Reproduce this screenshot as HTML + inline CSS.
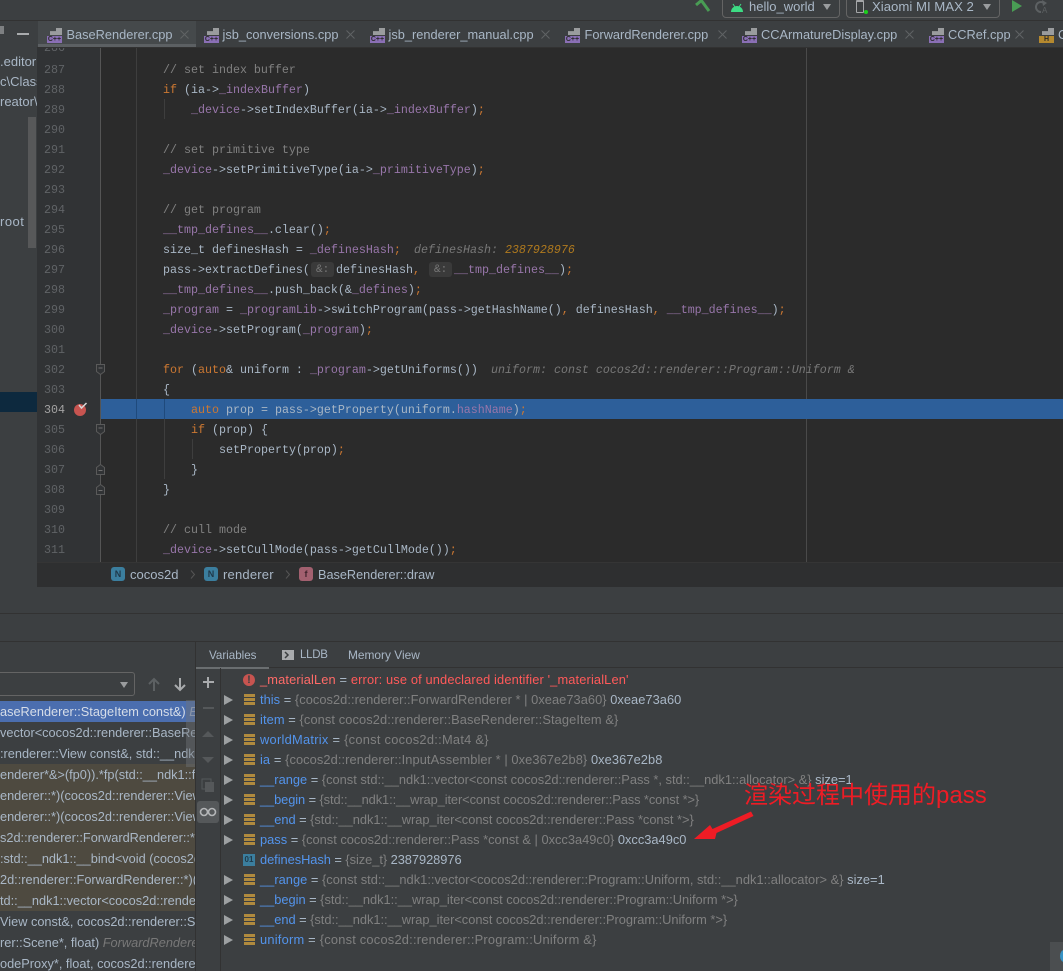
<!DOCTYPE html>
<html><head><meta charset="utf-8"><title>BaseRenderer.cpp</title>
<style>
html,body{margin:0;padding:0;background:#3c3f41;overflow:hidden}
#r{position:relative;width:1063px;height:971px;overflow:hidden;background:#3c3f41;font-family:"Liberation Sans","Noto Sans CJK SC",sans-serif;font-size:12.8px;color:#a9b7c6}
.a{position:absolute}
.t{position:absolute;white-space:pre;line-height:20px;height:20px}
.c{position:absolute;white-space:pre;font-family:"Liberation Mono",monospace;font-size:11.66px;line-height:20px;height:20px;color:#a9b7c6;margin-top:1px}
.n{position:absolute;left:44px;font-family:"Liberation Mono",monospace;font-size:11.66px;line-height:20px;color:#606366;margin-top:1px}
i{font-style:normal}
.k{color:#cc7832}.f{color:#9876aa}.m{color:#808080}.h{color:#787878;font-style:italic}.o{color:#b07a1e;font-style:italic}
.tab{position:absolute;top:25px;white-space:pre;line-height:20px;color:#a9b7c6;font-size:12.8px}
.x{position:absolute;top:30px}
.fd{position:absolute;top:28px;width:15px;height:16px}
.fd b{position:absolute;left:3px;top:0;width:12px;height:7px;background:#9a9c9e;clip-path:polygon(0 100%,0 45%,50% 45%,50% 0,100% 0,100% 100%)}
.fd u{position:absolute;left:0;top:8px;width:15px;height:7px;background:#8a6fb5;color:#2b2b2b;font:bold 7px/7px "Liberation Sans",sans-serif;text-align:center;text-decoration:none}
.v{position:absolute;left:260px;white-space:pre;line-height:20px;font-size:12.85px;color:#808080}
.v i{color:#5394ec}.v s{text-decoration:none;color:#a9b7c6}
.ar{position:absolute;left:224px;width:0;height:0;border-left:9px solid #9da0a2;border-top:5px solid transparent;border-bottom:5px solid transparent}
.ic{position:absolute;left:244px;width:11px;height:11px;background:repeating-linear-gradient(#b08a3e 0 3px,#3c3f41 3px 4px)}
.s{position:absolute;left:0;width:195px;overflow:hidden;white-space:pre;line-height:21px;height:21px;color:#a9b7c6;font-size:12.75px;padding-top:1px;box-sizing:content-box}
.fold{position:absolute;left:96px}
.ln{position:absolute;width:1px;background:#3e3e3e}
</style></head><body><div id="r">

<!-- top toolbar -->
<div class="a" style="left:0;top:20px;width:1063px;height:1px;background:#323232"></div>
<svg class="a" style="left:695px;top:0" width="16" height="13"><path d="M6 0L14 11" stroke="#499c54" stroke-width="3" fill="none"/><path d="M1 5L7 0" stroke="#499c54" stroke-width="3"/></svg>
<div class="a" style="left:722px;top:-6px;width:116px;height:22px;border:1px solid #646464;border-radius:4px"></div>
<svg class="a" style="left:730px;top:3px" width="15" height="10"><path d="M1 9A6 6 0 0 1 13 9Z" fill="#3ddc84"/><path d="M3 1L5 4M11 1L9 4" stroke="#3ddc84"/></svg>
<div class="t" style="left:749px;top:-3px;font-size:13px">hello_world</div>
<div class="a" style="left:823px;top:4px;border-top:6px solid #9a9c9e;border-left:4.5px solid transparent;border-right:4.5px solid transparent"></div>
<div class="a" style="left:846px;top:-6px;width:152px;height:22px;border:1px solid #646464;border-radius:4px"></div>
<div class="a" style="left:856px;top:0;width:6px;height:10px;border:1px solid #a4a6a8;border-top-width:2px;border-radius:1px"></div>
<div class="a" style="left:864px;top:10px;width:4px;height:4px;background:#1bd01b;border-radius:50%"></div>
<div class="t" style="left:872px;top:-3px;font-size:13.2px">Xiaomi MI MAX 2</div>
<div class="a" style="left:983px;top:4px;border-top:6px solid #9a9c9e;border-left:4.5px solid transparent;border-right:4.5px solid transparent"></div>
<div class="a" style="left:1012px;top:0;border-left:10px solid #499c54;border-top:6px solid transparent;border-bottom:6px solid transparent"></div>
<svg class="a" style="left:1034px;top:0" width="16" height="14"><path d="M10 3A5 5 0 1 0 7 12" stroke="#5d6163" stroke-width="2" fill="none"/><path d="M8 0L13 3L9 6Z" fill="#5d6163"/><text x="8" y="13" font-size="8" font-family="Liberation Sans" fill="#5d6163">A</text></svg>

<!-- left sidebar -->
<div class="a" style="left:0;top:26px;width:4px;height:8px;background:#9a9c9e;opacity:.7"></div>
<div class="a" style="left:17px;top:33px;width:12px;height:2px;background:#a9abad"></div>
<div class="t" style="left:0;top:52px;font-size:13px">.editor</div>
<div class="t" style="left:0;top:72px;font-size:13px;width:37px;overflow:hidden">c\Class</div>
<div class="t" style="left:0;top:92px;font-size:13px;width:37px;overflow:hidden">reator\</div>
<div class="t" style="left:0;top:212px;font-size:13px;letter-spacing:.5px">root</div>
<div class="a" style="left:28px;top:117px;width:8px;height:131px;background:#575859"></div>
<div class="a" style="left:0;top:392px;width:37px;height:20px;background:#0d293e"></div>

<!-- tab bar -->
<div class="a" style="left:38px;top:21px;width:158px;height:27px;background:#45494b"></div>
<div class="a" style="left:38px;top:44px;width:158px;height:4px;background:#5c6063"></div>
<div class="fd" style="left:47px"><b></b><u>C++</u></div><div class="tab" style="left:66.5px">BaseRenderer.cpp</div><svg class="x" style="left:180px" width="9" height="9"><path d="M.5 .5L8.5 8.5M8.5 .5L.5 8.5" stroke="#606365"/></svg>
<div class="fd" style="left:204px"><b></b><u>C++</u></div><div class="tab" style="left:222.5px">jsb_conversions.cpp</div><svg class="x" style="left:346px" width="9" height="9"><path d="M.5 .5L8.5 8.5M8.5 .5L.5 8.5" stroke="#606365"/></svg>
<div class="fd" style="left:370px"><b></b><u>C++</u></div><div class="tab" style="left:388.5px">jsb_renderer_manual.cpp</div><svg class="x" style="left:541px" width="9" height="9"><path d="M.5 .5L8.5 8.5M8.5 .5L.5 8.5" stroke="#606365"/></svg>
<div class="fd" style="left:565px"><b></b><u>C++</u></div><div class="tab" style="left:584.5px">ForwardRenderer.cpp</div><svg class="x" style="left:718px" width="9" height="9"><path d="M.5 .5L8.5 8.5M8.5 .5L.5 8.5" stroke="#606365"/></svg>
<div class="fd" style="left:742px"><b></b><u>C++</u></div><div class="tab" style="left:761px">CCArmatureDisplay.cpp</div><svg class="x" style="left:905px" width="9" height="9"><path d="M.5 .5L8.5 8.5M8.5 .5L.5 8.5" stroke="#606365"/></svg>
<div class="fd" style="left:929px"><b></b><u>C++</u></div><div class="tab" style="left:948px">CCRef.cpp</div><svg class="x" style="left:1015px" width="9" height="9"><path d="M.5 .5L8.5 8.5M8.5 .5L.5 8.5" stroke="#606365"/></svg>
<div class="fd" style="left:1039px"><b></b><u style="background:#b5892f">H</u></div><div class="tab" style="left:1058px">C</div>

<!-- editor -->
<div class="a" style="left:37px;top:47px;width:63px;height:540px;background:#313335;overflow:hidden">
 <div class="n" style="left:7px;top:-10px">286</div>
</div>
<div class="a" style="left:100px;top:47px;width:1px;height:515px;background:#555"></div>
<div class="a" style="left:101px;top:47px;width:962px;height:515px;background:#2b2b2b"></div>
<div class="a" style="left:37px;top:47px;width:1026px;height:1px;background:#323232"></div>
<div class="a" style="left:136px;top:48px;width:1px;height:514px;background:#3e3e3e"></div>
<div class="a" style="left:806px;top:48px;width:1px;height:514px;background:#4a4a4a"></div>
<div class="ln" style="left:164px;top:99px;height:20px"></div>
<div class="ln" style="left:164px;top:399px;height:80px"></div>
<div class="ln" style="left:192px;top:439px;height:20px"></div>
<div class="a" style="left:101px;top:399px;width:962px;height:20px;background:#2d5f9a"></div>
<div class="a" style="left:136px;top:399px;width:1px;height:20px;background:#1f4a7c"></div>
<div class="a" style="left:164px;top:399px;width:1px;height:20px;background:#1f4a7c"></div>
<svg class="fold" style="top:364px" width="9" height="11"><path d="M.5 .5H8.5V7.5L4.5 10.5L.5 7.5Z" fill="#313335" stroke="#5a5a5a"/><path d="M2.5 4H6.5" stroke="#6e6e6e"/></svg>
<svg class="fold" style="top:424px" width="9" height="11"><path d="M.5 .5H8.5V7.5L4.5 10.5L.5 7.5Z" fill="#313335" stroke="#5a5a5a"/><path d="M2.5 4H6.5" stroke="#6e6e6e"/></svg>
<svg class="fold" style="top:464px" width="9" height="11"><path d="M4.5 .5L8.5 3.5V10.5H.5V3.5Z" fill="#313335" stroke="#5a5a5a"/><path d="M2.5 6.5H6.5" stroke="#6e6e6e"/></svg>
<svg class="fold" style="top:484px" width="9" height="11"><path d="M4.5 .5L8.5 3.5V10.5H.5V3.5Z" fill="#313335" stroke="#5a5a5a"/><path d="M2.5 6.5H6.5" stroke="#6e6e6e"/></svg>

<div class="n" style="top:59px">287</div><div class="n" style="top:79px">288</div><div class="n" style="top:99px">289</div><div class="n" style="top:119px">290</div><div class="n" style="top:139px">291</div><div class="n" style="top:159px">292</div><div class="n" style="top:179px">293</div><div class="n" style="top:199px">294</div><div class="n" style="top:219px">295</div><div class="n" style="top:239px">296</div><div class="n" style="top:259px">297</div><div class="n" style="top:279px">298</div><div class="n" style="top:299px">299</div><div class="n" style="top:319px">300</div><div class="n" style="top:339px">301</div><div class="n" style="top:359px">302</div><div class="n" style="top:379px">303</div><div class="n" style="top:399px;color:#a4a3a3">304</div><div class="n" style="top:419px">305</div><div class="n" style="top:439px">306</div><div class="n" style="top:459px">307</div><div class="n" style="top:479px">308</div><div class="n" style="top:499px">309</div><div class="n" style="top:519px">310</div><div class="n" style="top:539px">311</div>

<div class="a" style="left:74px;top:404px;width:12px;height:12px;border-radius:50%;background:#c75450"></div>
<svg class="a" style="left:78px;top:402px" width="10" height="8"><path d="M1 3L3.5 6L8.5 1" stroke="#d8d8d8" stroke-width="1.5" fill="none"/></svg>

<div class="c m" style="left:163px;top:59px">// set index buffer</div>
<div class="c" style="left:163px;top:79px"><i class="k">if</i> (ia-&gt;<i class="f">_indexBuffer</i>)</div>
<div class="c" style="left:191px;top:99px"><i class="f">_device</i>-&gt;setIndexBuffer(ia-&gt;<i class="f">_indexBuffer</i>)<i class="k">;</i></div>
<div class="c m" style="left:163px;top:139px">// set primitive type</div>
<div class="c" style="left:163px;top:159px"><i class="f">_device</i>-&gt;setPrimitiveType(ia-&gt;<i class="f">_primitiveType</i>)<i class="k">;</i></div>
<div class="c m" style="left:163px;top:199px">// get program</div>
<div class="c" style="left:163px;top:219px"><i class="f">__tmp_defines__</i>.clear()<i class="k">;</i></div>
<div class="c" style="left:163px;top:239px">size_t definesHash = <i class="f">_definesHash</i><i class="k">;</i></div>
<div class="c h" style="left:414px;top:239px">definesHash: <i class="o">2387928976</i></div>
<div class="c" style="left:163px;top:259px">pass-&gt;extractDefines(</div>
<div class="a" style="left:311px;top:262px;width:23px;height:15px;background:#3a3a3a;border-radius:3px"></div>
<div class="c" style="left:316px;top:259px;color:#787878;font-size:11px">&amp;:</div>
<div class="c" style="left:336px;top:259px">definesHash<i class="k">,</i></div>
<div class="a" style="left:429px;top:262px;width:23px;height:15px;background:#3a3a3a;border-radius:3px"></div>
<div class="c" style="left:434px;top:259px;color:#787878;font-size:11px">&amp;:</div>
<div class="c" style="left:454px;top:259px"><i class="f">__tmp_defines__</i>)<i class="k">;</i></div>
<div class="c" style="left:163px;top:279px"><i class="f">__tmp_defines__</i>.push_back(&amp;<i class="f">_defines</i>)<i class="k">;</i></div>
<div class="c" style="left:163px;top:299px"><i class="f">_program</i> = <i class="f">_programLib</i>-&gt;switchProgram(pass-&gt;getHashName()<i class="k">,</i> definesHash<i class="k">,</i> <i class="f">__tmp_defines__</i>)<i class="k">;</i></div>
<div class="c" style="left:163px;top:319px"><i class="f">_device</i>-&gt;setProgram(<i class="f">_program</i>)<i class="k">;</i></div>
<div class="c" style="left:163px;top:359px"><i class="k">for</i> (<i class="k">auto</i>&amp; uniform : <i class="f">_program</i>-&gt;getUniforms())</div>
<div class="c h" style="left:491px;top:359px">uniform: const cocos2d::renderer::Program::Uniform &amp;</div>
<div class="c" style="left:163px;top:379px">{</div>
<div class="c" style="left:191px;top:399px"><i class="k">auto</i> prop = pass-&gt;getProperty(uniform.<i class="f">hashName</i>)<i class="k">;</i></div>
<div class="c" style="left:191px;top:419px"><i class="k">if</i> (prop) {</div>
<div class="c" style="left:219px;top:439px">setProperty(prop)<i class="k">;</i></div>
<div class="c" style="left:191px;top:459px">}</div>
<div class="c" style="left:163px;top:479px">}</div>
<div class="c m" style="left:163px;top:519px">// cull mode</div>
<div class="c" style="left:163px;top:539px"><i class="f">_device</i>-&gt;setCullMode(pass-&gt;getCullMode())<i class="k">;</i></div>

<!-- breadcrumb -->
<div class="a" style="left:37px;top:562px;width:1026px;height:25px;background:#2e2f30"></div>
<div class="a" style="left:37px;top:562px;width:1026px;height:1px;background:#353535"></div>
<div class="a" style="left:111px;top:567px;width:14px;height:14px;border-radius:3px;background:#3b7e9e;color:#20394a;font:bold 9px/14px 'Liberation Sans',sans-serif;text-align:center">N</div>
<div class="t" style="left:130px;top:565px;font-size:13px">cocos2d</div>
<svg class="a" style="left:190px;top:570px" width="6" height="9"><path d="M1 0.5L4.5 4.5L1 8.5" stroke="#555" fill="none"/></svg>
<div class="a" style="left:204px;top:567px;width:14px;height:14px;border-radius:3px;background:#3b7e9e;color:#20394a;font:bold 9px/14px 'Liberation Sans',sans-serif;text-align:center">N</div>
<div class="t" style="left:223px;top:565px;font-size:13px;letter-spacing:.2px">renderer</div>
<svg class="a" style="left:285px;top:570px" width="6" height="9"><path d="M1 0.5L4.5 4.5L1 8.5" stroke="#555" fill="none"/></svg>
<div class="a" style="left:299px;top:567px;width:14px;height:14px;border-radius:3px;background:#a2606f;color:#40242c;font:bold 9px/14px 'Liberation Sans',sans-serif;text-align:center">f</div>
<div class="t" style="left:318px;top:565px;font-size:12.7px">BaseRenderer::draw</div>

<!-- gap bars -->
<div class="a" style="left:0;top:613px;width:1063px;height:1px;background:#323232"></div>
<div class="a" style="left:0;top:641px;width:1063px;height:1px;background:#323232"></div>

<!-- debug tabs -->
<div class="a" style="left:195px;top:642px;width:1px;height:329px;background:#323232"></div>
<div class="a" style="left:196px;top:667px;width:867px;height:1px;background:#323232"></div>
<div class="a" style="left:196px;top:667px;width:73px;height:2px;background:#6a6e70"></div>
<div class="t" style="left:209px;top:645px;font-size:11.6px;padding-top:1px">Variables</div>
<div class="a" style="left:282px;top:650px;width:12px;height:10px;background:#a9abad"></div>
<svg class="a" style="left:284px;top:651px" width="6" height="8"><path d="M1 1L4 4L1 7" stroke="#3c3f41" stroke-width="1.5" fill="none"/></svg>
<div class="t" style="left:300px;top:645px;font-size:11.5px;letter-spacing:-.3px">LLDB</div>
<div class="t" style="left:348px;top:645px;font-size:11.9px">Memory View</div>

<!-- frames -->
<div class="a" style="left:-6px;top:672px;width:141px;height:24px;border:1px solid #646464;border-radius:3px;box-sizing:border-box"></div>
<div class="a" style="left:120px;top:682px;border-top:6px solid #9a9c9e;border-left:4.5px solid transparent;border-right:4.5px solid transparent"></div>
<svg class="a" style="left:147px;top:677px" width="42" height="15"><path d="M7 14V2M2 7L7 2L12 7" stroke="#5d6163" stroke-width="2" fill="none"/><path d="M33 1V13M28 8L33 13L38 8" stroke="#a9abad" stroke-width="2" fill="none"/></svg>
<div class="a" style="left:0;top:701px;width:195px;height:21px;background:#4b6eaf"></div>
<div class="a" style="left:0;top:764px;width:195px;height:147px;background:#4e4a40"></div>
<div class="s" style="top:700px;color:#d6dde8">aseRenderer::StageItem const&amp;) <i style="font-style:italic;color:#9fb0cf">E</i></div>
<div class="s" style="top:721px">vector&lt;cocos2d::renderer::BaseRenderer</div>
<div class="s" style="top:742px">:renderer::View const&amp;, std::__ndk1::</div>
<div class="s" style="top:763px">enderer*&amp;&gt;(fp0)).*fp(std::__ndk1::forward</div>
<div class="s" style="top:784px">enderer::*)(cocos2d::renderer::View const</div>
<div class="s" style="top:805px">enderer::*)(cocos2d::renderer::View const</div>
<div class="s" style="top:826px">s2d::renderer::ForwardRenderer::*)(</div>
<div class="s" style="top:847px">:std::__ndk1::__bind&lt;void (cocos2d::rend</div>
<div class="s" style="top:868px">2d::renderer::ForwardRenderer::*)(coco</div>
<div class="s" style="top:889px">td::__ndk1::vector&lt;cocos2d::renderer</div>
<div class="s" style="top:910px">View const&amp;, cocos2d::renderer::Scene</div>
<div class="s" style="top:931px">rer::Scene*, float) <i style="color:#787878;font-style:italic">ForwardRenderer</i></div>
<div class="s" style="top:952px">odeProxy*, float, cocos2d::renderer</div>
<div class="a" style="left:186px;top:700px;width:9px;height:67px;background:rgba(110,115,120,.45)"></div>

<!-- vars toolbar -->
<div class="a" style="left:220px;top:668px;width:1px;height:303px;background:#323232"></div>
<div class="a" style="left:203px;top:681px;width:11px;height:2px;background:#a9abad"></div>
<div class="a" style="left:207px;top:677px;width:2px;height:11px;background:#a9abad"></div>
<div class="a" style="left:203px;top:707px;width:11px;height:2px;background:#55585a"></div>
<div class="a" style="left:202px;top:731px;border-bottom:6px solid #55585a;border-left:6px solid transparent;border-right:6px solid transparent"></div>
<div class="a" style="left:202px;top:757px;border-top:6px solid #55585a;border-left:6px solid transparent;border-right:6px solid transparent"></div>
<svg class="a" style="left:201px;top:778px" width="14" height="15"><rect x="1" y="1" width="9" height="10" fill="none" stroke="#55585a"/><rect x="4" y="4" width="9" height="10" fill="#55585a"/></svg>
<div class="a" style="left:197px;top:801px;width:22px;height:22px;background:#55585a;border-radius:3px"></div>
<svg class="a" style="left:199px;top:806px" width="18" height="12"><circle cx="5" cy="6" r="3.5" fill="none" stroke="#b4b6b8" stroke-width="1.6"/><circle cx="13" cy="6" r="3.5" fill="none" stroke="#b4b6b8" stroke-width="1.6"/></svg>

<!-- variables -->
<div class="a" style="left:243px;top:674px;width:12px;height:12px;border-radius:50%;background:#c75450;color:#3c3f41;font:bold 11px/12px 'Liberation Sans',sans-serif;text-align:center">!</div>
<div class="v" style="top:670px;letter-spacing:.13px"><i style="color:#ff6b68">_materialLen</i> <s>=</s> <i style="color:#ff5a5a">error: use of undeclared identifier '_materialLen'</i></div>

<div class="ar" style="top:695px"></div><div class="ic" style="top:694px"></div>
<div class="v" style="top:690px;letter-spacing:.04px"><i>this</i> <s>=</s> {cocos2d::renderer::ForwardRenderer * | 0xeae73a60} <s>0xeae73a60</s></div>
<div class="ar" style="top:715px"></div><div class="ic" style="top:714px"></div>
<div class="v" style="top:710px;letter-spacing:.09px"><i>item</i> <s>=</s> {const cocos2d::renderer::BaseRenderer::StageItem &amp;}</div>
<div class="ar" style="top:735px"></div><div class="ic" style="top:734px"></div>
<div class="v" style="top:730px;letter-spacing:.27px"><i>worldMatrix</i> <s>=</s> {const cocos2d::Mat4 &amp;}</div>
<div class="ar" style="top:755px"></div><div class="ic" style="top:754px"></div>
<div class="v" style="top:750px;letter-spacing:.08px"><i>ia</i> <s>=</s> {cocos2d::renderer::InputAssembler * | 0xe367e2b8} <s>0xe367e2b8</s></div>
<div class="ar" style="top:775px"></div><div class="ic" style="top:774px"></div>
<div class="v" style="top:770px"><i>__range</i> <s>=</s> {const std::__ndk1::vector&lt;const cocos2d::renderer::Pass *, std::__ndk1::allocator&gt; &amp;} <s>size=1</s></div>
<div class="ar" style="top:795px"></div><div class="ic" style="top:794px"></div>
<div class="v" style="top:790px;letter-spacing:-.09px"><i>__begin</i> <s>=</s> {std::__ndk1::__wrap_iter&lt;const cocos2d::renderer::Pass *const *&gt;}</div>
<div class="ar" style="top:815px"></div><div class="ic" style="top:814px"></div>
<div class="v" style="top:810px;letter-spacing:-.03px"><i>__end</i> <s>=</s> {std::__ndk1::__wrap_iter&lt;const cocos2d::renderer::Pass *const *&gt;}</div>
<div class="ar" style="top:835px"></div><div class="ic" style="top:834px"></div>
<div class="v" style="top:830px"><i>pass</i> <s>=</s> {const cocos2d::renderer::Pass *const &amp; | 0xcc3a49c0} <s>0xcc3a49c0</s></div>
<div class="a" style="left:243px;top:854px;width:12px;height:12px;background:#3b7e9e;color:#1f3a4a;font:bold 8px/12px 'Liberation Sans',sans-serif;text-align:center">01</div>
<div class="v" style="top:850px;letter-spacing:-.05px"><i>definesHash</i> <s>=</s> {size_t} <s>2387928976</s></div>
<div class="ar" style="top:875px"></div><div class="ic" style="top:874px"></div>
<div class="v" style="top:870px;letter-spacing:.02px"><i>__range</i> <s>=</s> {const std::__ndk1::vector&lt;cocos2d::renderer::Program::Uniform, std::__ndk1::allocator&gt; &amp;} <s>size=1</s></div>
<div class="ar" style="top:895px"></div><div class="ic" style="top:894px"></div>
<div class="v" style="top:890px;letter-spacing:-.02px"><i>__begin</i> <s>=</s> {std::__ndk1::__wrap_iter&lt;const cocos2d::renderer::Program::Uniform *&gt;}</div>
<div class="ar" style="top:915px"></div><div class="ic" style="top:914px"></div>
<div class="v" style="top:910px;letter-spacing:-.03px"><i>__end</i> <s>=</s> {std::__ndk1::__wrap_iter&lt;const cocos2d::renderer::Program::Uniform *&gt;}</div>
<div class="ar" style="top:935px"></div><div class="ic" style="top:934px"></div>
<div class="v" style="top:930px;letter-spacing:.22px"><i>uniform</i> <s>=</s> {const cocos2d::renderer::Program::Uniform &amp;}</div>

<!-- annotation -->
<div class="a" style="left:744px;top:780px;white-space:pre;font:24px/32px 'Liberation Sans','Noto Sans CJK SC',sans-serif;color:#ee1c25">渲染过程中使用的pass</div>
<svg class="a" style="left:690px;top:808px" width="70" height="36"><path d="M4 31L20 17L22.5 21L61 3.5L63.5 8L26.5 25L25 31Z" fill="#ee1c25"/></svg>

<div class="a" style="left:1050px;top:942px;width:13px;height:29px;background:#4b4e50"></div>
<div class="a" style="left:1060px;top:950px;width:8px;height:12px;border-radius:50%;background:#3592c4"></div>
</div></body></html>
